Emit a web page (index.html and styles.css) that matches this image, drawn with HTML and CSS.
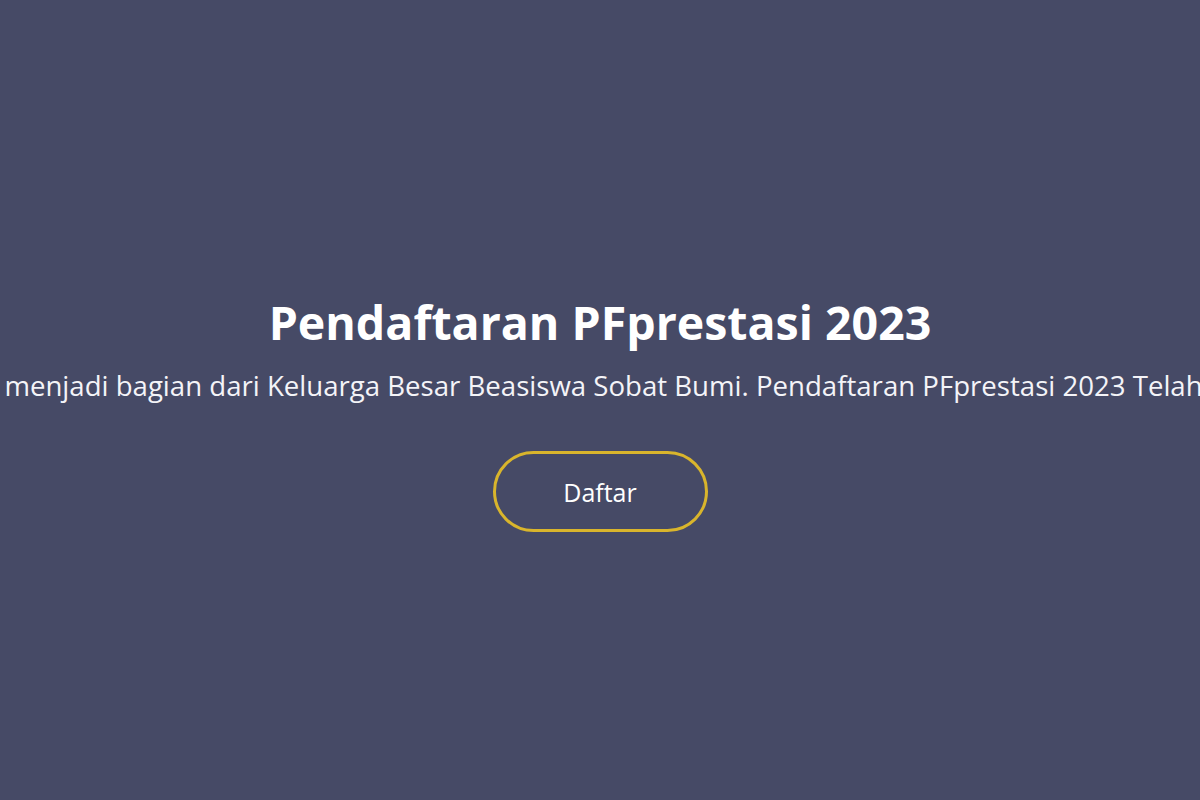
FILE: index.html
```html
<!DOCTYPE html>
<html lang="id">
<head>
<meta charset="utf-8">
<link rel="stylesheet" href="styles.css">
<title>Pendaftaran PFprestasi 2023</title>
</head>
<body>
<main class="hero">
  <h1 class="title">Pendaftaran PFprestasi 2023</h1>
  <div class="lead-wrap">
    <p class="lead">menjadi bagian dari Keluarga Besar Beasiswa Sobat Bumi. Pendaftaran PFprestasi 2023 Telah</p>
  </div>
  <a class="btn" href="#">Daftar</a>
</main>
</body>
</html>
```
FILE: styles.css
```css
html, body {
  margin: 0;
  padding: 0;
  height: 100%;
  background: #464a66;
  overflow: hidden;
}
.hero {
  height: 800px;
  display: flex;
  flex-direction: column;
  align-items: center;
  justify-content: flex-start;
  padding-top: 292px;
  box-sizing: border-box;
  color: #ffffff;
}
.title {
  margin: 0;
  font-family: "Open Sans", sans-serif;
  font-weight: 700;
  font-size: 46.5px;
  line-height: 60px;
  letter-spacing: 0;
}
.lead-wrap {
  width: 1200px;
  box-sizing: border-box;
  padding-left: 7px;
  display: flex;
  justify-content: center;
  overflow: hidden;
  margin-top: 15px;
}
.lead {
  margin: 0;
  flex: none;
  white-space: nowrap;
  font-family: "Open Sans", sans-serif;
  font-size: 27.6px;
  line-height: 36px;
  color: #f4f4f8;
}
.btn {
  margin-top: 48px;
  width: 215px;
  height: 81px;
  box-sizing: border-box;
  border: 3px solid #d9b52c;
  border-radius: 41px;
  display: flex;
  align-items: center;
  justify-content: center;
  font-family: "Open Sans", sans-serif;
  font-size: 25px;
  font-weight: 500;
  color: #ffffff;
  text-decoration: none;
}
```
